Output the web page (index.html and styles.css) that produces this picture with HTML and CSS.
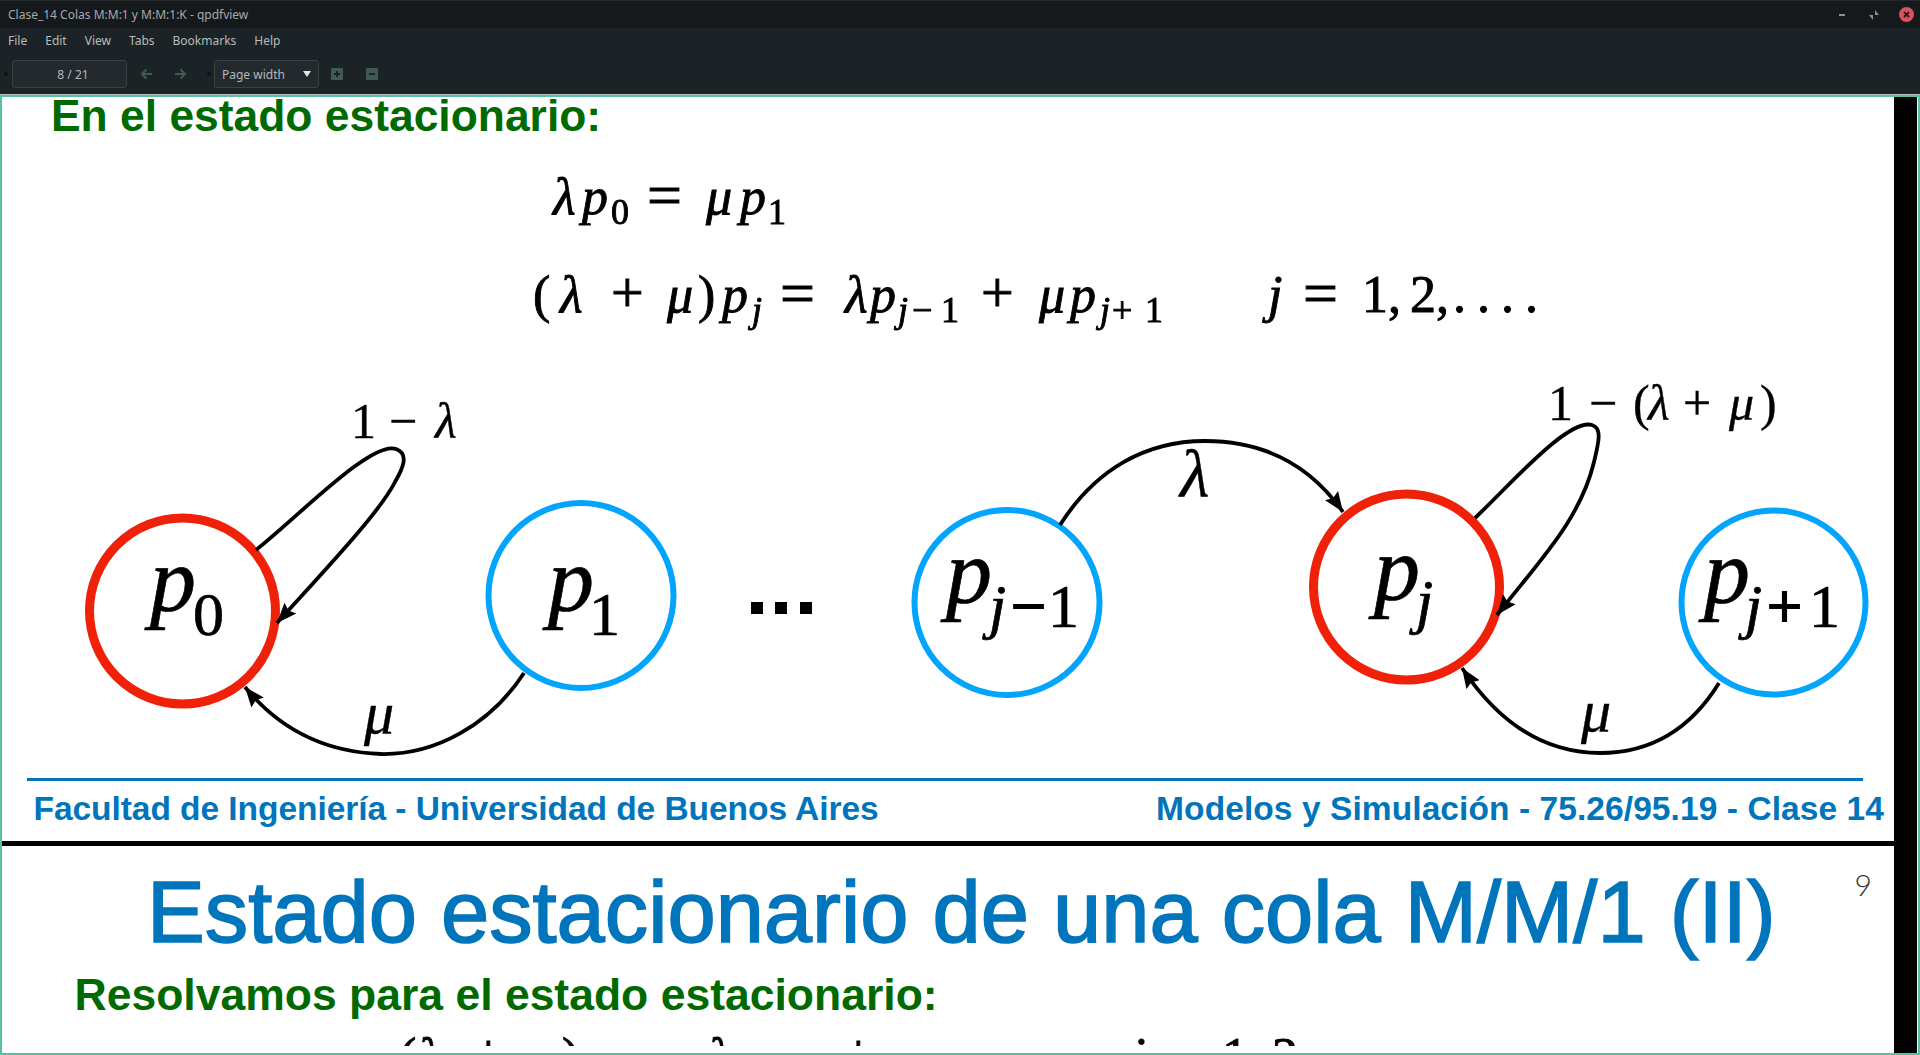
FILE: index.html
```html
<!DOCTYPE html>
<html lang="es">
<head>
<meta charset="utf-8">
<title>Clase_14 Colas M:M:1 y M:M:1:K - qpdfview</title>
<link rel="stylesheet" href="styles.css">
</head>
<body>
<header class="titlebar">
  <span class="title">Clase_14 Colas M:M:1 y M:M:1:K - qpdfview</span>
  <div class="winbtns">
    <svg class="wb" width="10" height="12" viewBox="0 0 10 12"><rect x="0" y="5" width="6" height="2" fill="#8b9093"/></svg>
    <svg class="wb" width="12" height="12" viewBox="0 0 12 12"><path d="M7 1l4 5H7zM5 11L1 6h4z" fill="#8b9093"/></svg>
    <svg class="wb" width="15" height="15" viewBox="0 0 15 15"><circle cx="7.500" cy="7.500" r="7.500" fill="#d9525e"/><path d="M5 5l5 5M10 5l-5 5" stroke="#2a1c1e" stroke-width="2"/></svg>
  </div>
</header>
<nav class="menubar">
  <span>File</span><span>Edit</span><span>View</span><span>Tabs</span><span>Bookmarks</span><span>Help</span>
</nav>
<div class="toolbar">
  <i class="grip"></i>
  <div class="field pagefield">8 / 21</div>
  <svg class="arrow" width="12" height="12" viewBox="0 0 12 12"><path d="M12 6H2M6.500 1.500L2 6l4.500 4.500" fill="none" stroke="#3f5a55" stroke-width="2"/></svg>
  <svg class="arrow second" width="12" height="12" viewBox="0 0 12 12"><path d="M0 6h10M5.500 1.500L10 6l-4.500 4.500" fill="none" stroke="#3f5a55" stroke-width="2"/></svg>
  <i class="grip gap"></i>
  <div class="field zoomfield"><span>Page width</span><i class="caret"></i></div>
  <svg class="zbtn" width="12" height="12" viewBox="0 0 12 12"><rect width="12" height="12" rx="1" fill="#3f5a55"/><path d="M3 6h6M6 3v6" stroke="#1b2326" stroke-width="2"/></svg>
  <svg class="zbtn next" width="12" height="12" viewBox="0 0 12 12"><rect width="12" height="12" rx="1" fill="#3f5a55"/><path d="M3 6h6" stroke="#1b2326" stroke-width="2"/></svg>
</div>
<main class="viewer">
  <div class="pages">
    <section class="slide first">
      <h2 class="heading">En el estado estacionario:</h2>
      <svg class="figure" width="1892" height="640" viewBox="2 138 1892 640">
        <defs>
          <marker id="head" markerUnits="userSpaceOnUse" markerWidth="22" markerHeight="18" refX="20" refY="9" orient="auto">
            <path d="M0 1L20 9 0 17 3 9z" fill="#000"/>
          </marker>
        </defs>
        <g class="blurred">
          <text class="eq" y="214"><tspan class="it" x="553">λ</tspan><tspan class="it" x="582">p</tspan><tspan class="sub" x="611" y="224">0</tspan><tspan class="op" x="647" y="216">=</tspan><tspan class="it" x="706" y="214">μ</tspan><tspan class="it" x="740">p</tspan><tspan class="sub" x="768" y="224">1</tspan></text>
          <text class="eq" y="312"><tspan x="533">(</tspan><tspan class="it" x="560">λ</tspan><tspan class="op2" x="611">+</tspan><tspan class="it" x="667">μ</tspan><tspan x="698">)</tspan><tspan class="it" x="722">p</tspan><tspan class="sub it" x="752" y="322">j</tspan><tspan class="op" x="780" y="314">=</tspan><tspan class="it" x="845" y="312">λ</tspan><tspan class="it" x="870">p</tspan><tspan class="sub it" x="898" y="322">j</tspan><tspan class="sub" x="912">−</tspan><tspan class="sub" x="941">1</tspan><tspan class="op2" x="981" y="312">+</tspan><tspan class="it" x="1039">μ</tspan><tspan class="it" x="1070">p</tspan><tspan class="sub it" x="1100" y="322">j</tspan><tspan class="sub" x="1112">+</tspan><tspan class="sub" x="1145">1</tspan><tspan class="it" x="1268" y="312">j</tspan><tspan class="op" x="1303" y="314">=</tspan><tspan x="1362" y="312">1,</tspan><tspan x="1410">2,</tspan><tspan x="1453">.</tspan><tspan x="1477">.</tspan><tspan x="1501">.</tspan><tspan x="1525">.</tspan></text>
        </g>
        <g class="soft">
          <circle class="node red" cx="182.500" cy="611" r="93"/>
          <circle class="node blue" cx="581" cy="595.500" r="92.500"/>
          <circle class="node blue" cx="1007" cy="602.500" r="92.500"/>
          <circle class="node red" cx="1406.500" cy="587" r="93"/>
          <circle class="node blue" cx="1773.500" cy="602.500" r="92"/>
          <path class="edge" d="M256 550C300 515 372 440 396 449C410 454 402 470 395 482C380 512 325 570 277 623" marker-end="url(#head)"/>
          <path class="edge" d="M524 673C490 725 435 755 381 754C325 752 280 730 245 687" marker-end="url(#head)"/>
          <path class="edge" d="M1060 525C1095 470 1145 441 1205 441C1265 441 1310 465 1343 512" marker-end="url(#head)"/>
          <path class="edge" d="M1475 518C1510 485 1568 418 1592 425C1603 428 1598 445 1594 462C1580 520 1540 560 1497 615" marker-end="url(#head)"/>
          <path class="edge" d="M1719 683C1690 730 1650 753 1600 753C1545 753 1500 725 1462 668" marker-end="url(#head)"/>
          <text class="lab" y="438"><tspan x="351">1</tspan><tspan x="389">−</tspan><tspan class="it" x="435">λ</tspan></text>
          <text class="lab" y="420"><tspan x="1548">1</tspan><tspan x="1589">−</tspan><tspan x="1633">(</tspan><tspan class="it" x="1648">λ</tspan><tspan x="1683">+</tspan><tspan class="it" x="1729">μ</tspan><tspan x="1760">)</tspan></text>
          <text class="lab big it" x="1180" y="497">λ</text>
          <text class="lab mu it" x="364" y="733">μ</text>
          <text class="lab mu it" x="1581" y="731">μ</text>
          <text class="pn"><tspan class="it" x="150" y="611">p</tspan><tspan class="ps" x="193" y="635">0</tspan></text>
          <text class="pn"><tspan class="it" x="548" y="611">p</tspan><tspan class="ps" x="589" y="635">1</tspan></text>
          <text class="pn"><tspan class="it" x="946" y="603">p</tspan><tspan class="ps it" x="989" y="627">j</tspan><tspan class="ps heavy" x="1011">−</tspan><tspan class="ps" x="1048">1</tspan></text>
          <text class="pn"><tspan class="it" x="1374" y="600">p</tspan><tspan class="ps it" x="1416" y="622">j</tspan></text>
          <text class="pn"><tspan class="it" x="1704" y="603">p</tspan><tspan class="ps it" x="1745" y="627">j</tspan><tspan class="ps heavy" x="1767">+</tspan><tspan class="ps" x="1809">1</tspan></text>
          <rect x="751" y="602" width="12" height="12"/><rect x="775" y="602" width="12" height="12"/><rect x="800" y="602" width="12" height="12"/>
        </g>
      </svg>
      <hr class="rule">
      <footer class="foot">
        <span class="footleft">Facultad de Ingeniería - Universidad de Buenos Aires</span>
        <span class="footright">Modelos y Simulación - 75.26/95.19 - Clase 14</span>
      </footer>
    </section>
    <section class="slide second">
      <span class="pageno">9</span>
      <h1 class="bigtitle">Estado estacionario de una cola M/M/1 (II)</h1>
      <h2 class="heading two">Resolvamos para el estado estacionario:</h2>
      <svg class="cut" width="1892" height="27" viewBox="2 1026 1892 27">
        <g class="blurred">
          <text class="eq" y="1081"><tspan x="399">(</tspan><tspan class="it" x="418">λ</tspan><tspan class="op2" x="472">+</tspan><tspan class="it" x="528">μ</tspan><tspan x="562">)</tspan><tspan class="it" x="586">p</tspan><tspan class="op" x="640" y="1083">=</tspan><tspan class="it" x="708" y="1081">λ</tspan><tspan class="it" x="735">p</tspan><tspan class="op2" x="842">+</tspan><tspan class="it" x="902">μ</tspan><tspan class="it" x="935">p</tspan><tspan class="it" x="1131">j</tspan><tspan class="op" x="1165" y="1083">=</tspan><tspan x="1222" y="1081">1,</tspan><tspan x="1272">2,</tspan></text>
        </g>
      </svg>
    </section>
  </div>
  <div class="scrollstrip"></div>
</main>
</body>
</html>
```
FILE: styles.css
```css
* { box-sizing: border-box; }
html, body { margin: 0; height: 100%; }
body {
  width: 1920px; height: 1055px; overflow: hidden;
  display: flex; flex-direction: column;
  background: #1c2326; color: #b7bcbe;
  font-family: "Noto Sans", sans-serif; font-size: 12px;
}
.titlebar {
  height: 28px; flex: none; background: #15191c;
  border-top: 1px solid #24292c;
  display: flex; align-items: center; justify-content: space-between;
  padding: 0 6px 0 8px; color: #a5a9ab;
}
.winbtns { display: flex; align-items: center; gap: 19px; }
.wb { display: block; }
.menubar {
  height: 26px; flex: none; display: flex; align-items: center; gap: 18px;
  padding: 0 8px 1px;
}
.toolbar {
  height: 41px; flex: none; display: flex; align-items: center;
  padding-left: 4px; border-bottom: 1px solid #b4bcb9;
}
.grip { flex: none; width: 4px; height: 4px; border-radius: 50%; background: #101416; display: block; }
.field {
  flex: none; height: 28px; background: #232a2e; border: 1px solid #3a4145; border-radius: 3px;
  display: flex; align-items: center; color: #b2b7b9;
}
.pagefield { width: 115px; margin-left: 4px; justify-content: center; padding-left: 7px; }
.arrow { flex: none; margin-left: 13px; }
.arrow.second { margin-left: 23px; }
.grip.gap { margin-left: 20px; }
.zoomfield { width: 105px; margin-left: 3px; padding: 0 7px 0 7px; justify-content: space-between; }
.caret { width: 0; height: 0; border: 4.500px solid transparent; border-top: 6px solid #e4e6e7; border-bottom: 0; display: block; }
.zbtn { flex: none; margin-left: 12px; }
.zbtn.next { margin-left: 23px; }
.viewer {
  flex: 1; min-height: 0; display: flex;
  border: 2px solid #59bfa9; background: #fff; overflow: hidden;
}
.pages { width: 1892px; flex: none; overflow: hidden; background: #fff; }
.scrollstrip { flex: 1; background: #000; margin-right: 1px; }
.slide { background: #fff; overflow: hidden; position: relative; }
.slide.first { height: 744px; }
.slide.second { border-top: 5px solid #000; height: 212px; }
.heading {
  margin: -5px 0 -2px; padding-left: 49px;
  font: bold 44.400px/48px "Liberation Sans", Arial, sans-serif; color: #006a00;
}
.figure { display: block; }
.blurred { filter: blur(.5px); }
.soft { filter: blur(.3px); }
.eq { font: 52px "Liberation Serif", "Times New Roman", serif; fill: #000; stroke: #000; stroke-width: .9; }
.sub { font-size: 36px; }
.op { font-size: 62px; }
.op2 { font-size: 58px; }
.node { fill: #fff; }
.red { stroke: #ef2209; stroke-width: 9; }
.blue { stroke: #03a4fc; stroke-width: 6; }
.edge { fill: none; stroke: #000; stroke-width: 3.800; }
.lab { font: 50px "Liberation Serif", serif; stroke: #000; stroke-width: .4; }
.big { font-size: 68px; }
.mu { font-size: 60px; }
.pn { font: 92px "Liberation Serif", serif; stroke: #000; stroke-width: .7; }
.ps { font-size: 62px; }
.heavy { stroke-width: 2; }
.it { font-style: italic; }
.rule { display: block; margin: 0 0 0 25px; width: 1836px; height: 3px; border: 0; background: #0075bb; }
.foot {
  display: flex; justify-content: space-between;
  padding: 8px 10px 0 31.500px;
  font: bold 33.500px/40px "Liberation Sans", Arial, sans-serif; color: #0075bb;
}
.footleft { letter-spacing: -.05px; }
.footright { letter-spacing: .08px; }
.pageno {
  position: absolute; top: 20px; right: 22px;
  font: 300 30px/36px "Lato", sans-serif; color: #333;
}
.bigtitle {
  margin: 0; padding: 16px 0 0 145px; white-space: nowrap;
  font: 400 86.700px/100px "Liberation Sans", Arial, sans-serif; color: #0075bb;
  -webkit-text-stroke: 1.600px #0075bb;
}
.heading.two { padding-left: 72.500px; margin: 9px 0 0; font-size: 44.500px; }
.cut { display: block; }
```
